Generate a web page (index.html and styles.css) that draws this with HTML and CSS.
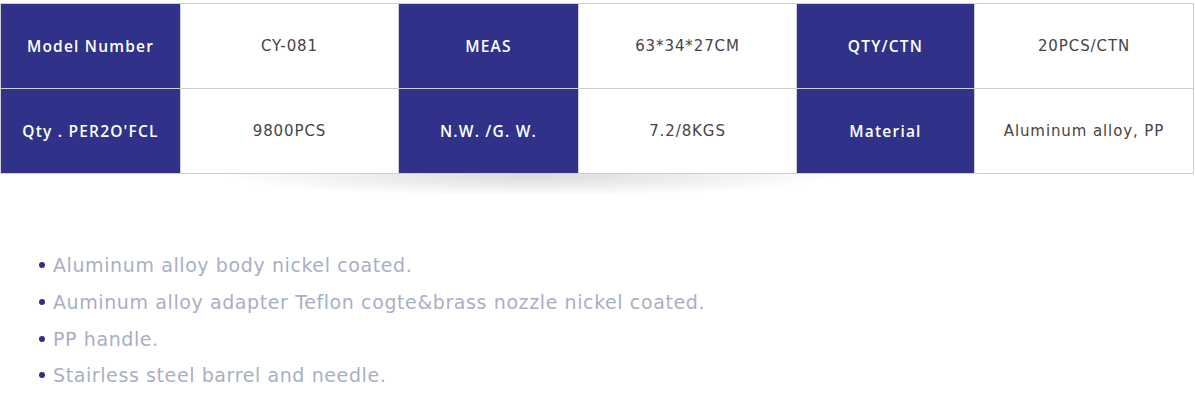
FILE: index.html
```html
<!DOCTYPE html>
<html>
<head>
<meta charset="utf-8">
<link rel="stylesheet" href="styles.css">
</head>
<body>
<div class="spec">
  <div class="shadow"></div>
  <table class="spec-table">
    <colgroup>
      <col class="c-key"><col class="c-val"><col class="c-key"><col class="c-val"><col class="c-key2"><col class="c-val2">
    </colgroup>
    <tr>
      <th>Model Number</th><td>CY-081</td>
      <th>MEAS</th><td>63*34*27CM</td>
      <th>QTY/CTN</th><td>20PCS/CTN</td>
    </tr>
    <tr>
      <th>Qty . PER2O'FCL</th><td>9800PCS</td>
      <th>N.W. /G. W.</th><td>7.2/8KGS</td>
      <th>Material</th><td>Aluminum alloy, PP</td>
    </tr>
  </table>
</div>
<ul class="features">
  <li>Aluminum alloy body nickel coated.</li>
  <li>Auminum alloy adapter Teflon cogte&amp;brass nozzle nickel coated.</li>
  <li>PP handle.</li>
  <li>Stairless steel barrel and needle.</li>
</ul>
</body>
</html>
```
FILE: styles.css
```css
html, body { margin: 0; padding: 0; background: #fff; }
body { font-family: "DejaVu Sans", "Open Sans", sans-serif; }
.spec { position: relative; padding-top: 3px; width: 1193px; }
.shadow {
  position: absolute; left: 220px; width: 620px; top: 160px; height: 40px;
  background: radial-gradient(ellipse 50% 50% at 50% 40%, rgba(0,0,0,0.14), rgba(0,0,0,0) 100%);
}
.spec-table {
  position: relative;
  width: 1193px; border-collapse: collapse; table-layout: fixed;
}
.c-key { width: 180px; }
.c-val { width: 218px; }
.c-key2 { width: 178px; }
.c-val2 { width: 219px; }
.spec-table th, .spec-table td {
  border: 1px solid #cfcfcf; height: 84px; padding: 0; text-align: center;
  font-size: 15px;
}
.spec-table th {
  background: #303189; color: #fff; font-weight: 600;
  font-family: "Open Sans", sans-serif; letter-spacing: 1.2px; font-size: 15.5px;
}
.spec-table td { background: #fff; color: #454545; font-weight: 400; letter-spacing: 0.9px; }
.features {
  list-style: none; margin: 0; padding: 0 0 0 39px; margin-top: 73px;
}
.features li {
  display: flex; align-items: center; gap: 8px;
  color: #a9afc3; font-size: 19px; letter-spacing: 0.6px; height: 36.7px;
}
.features li::before {
  content: ""; width: 6px; height: 6px; border-radius: 50%; background: #303189; flex: none;
}
```
